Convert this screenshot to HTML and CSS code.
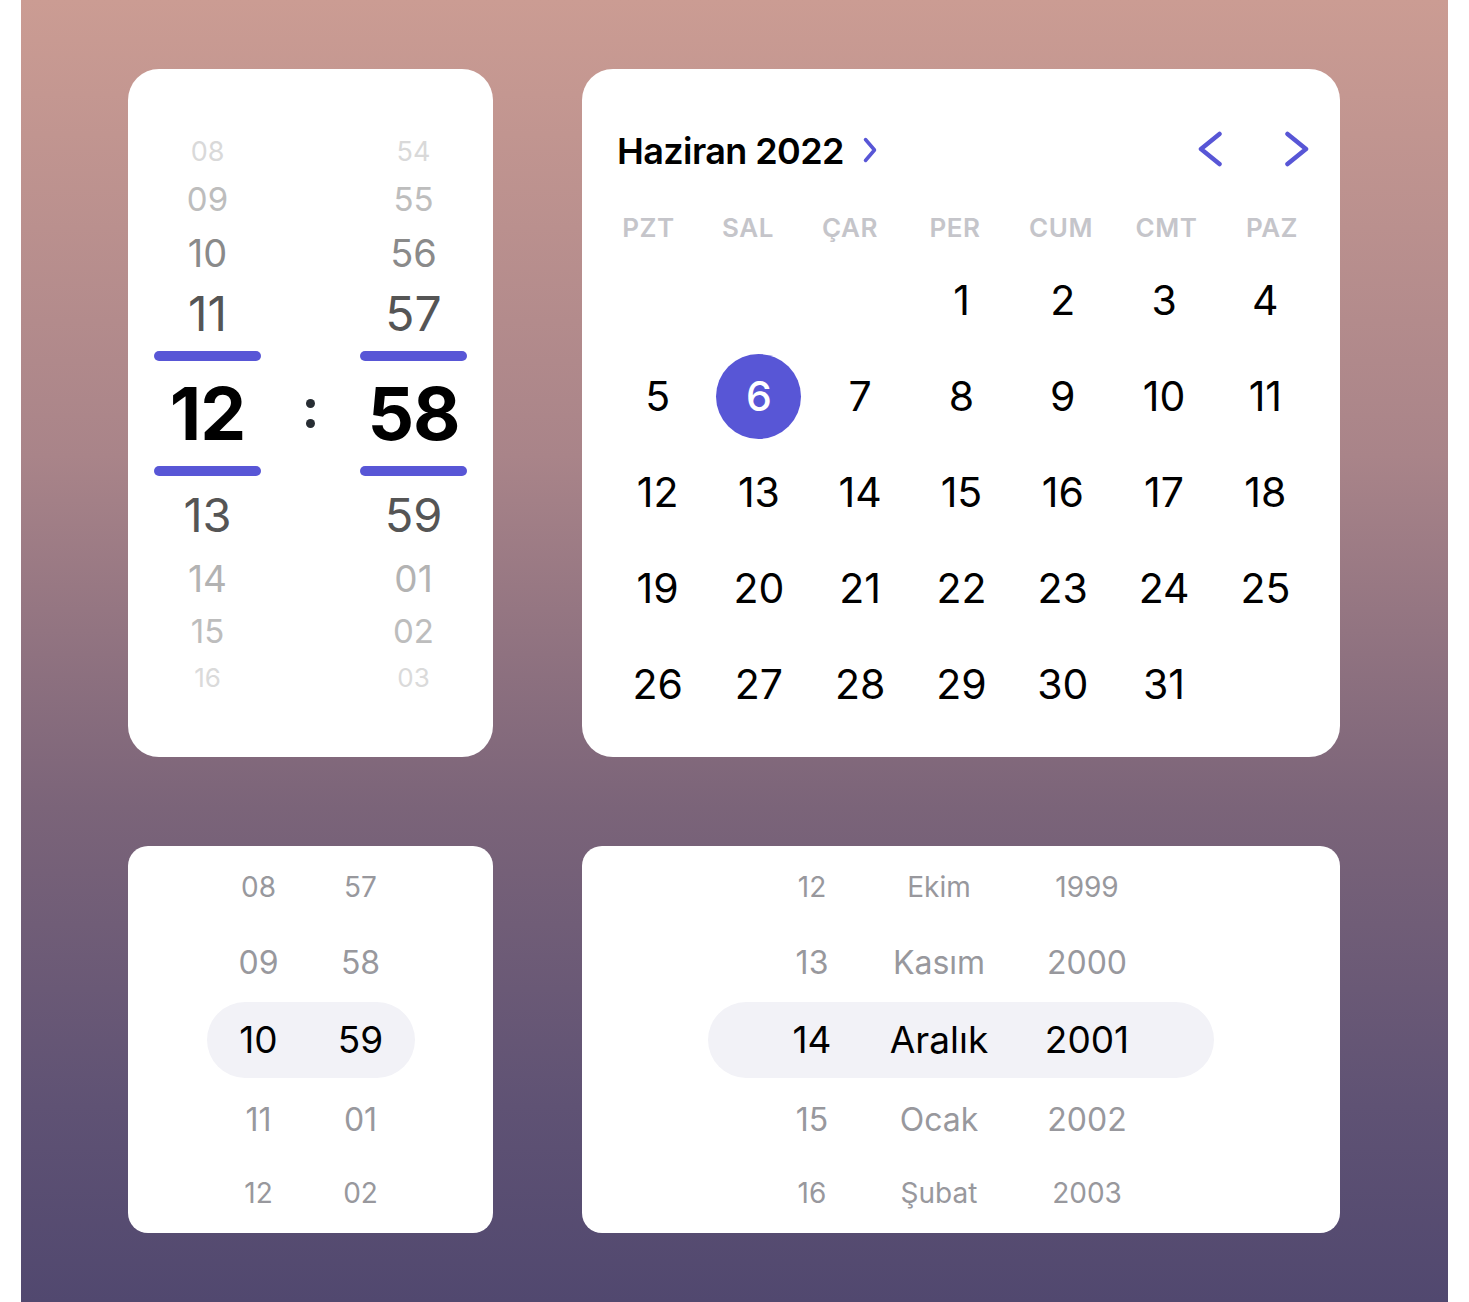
FILE: index.html
```html
<!DOCTYPE html>
<html lang="tr">
<head>
    <meta charset="UTF-8">
    <meta name="viewport" content="width=device-width, initial-scale=1.0">
    <title>Tarih ve Saat Seçiciler</title>
    <link rel="stylesheet" href="styles.css">
</head>
<body>
    <div class="stage">
        <div class="board">

            <!-- Big time wheel -->
            <div class="card wheel">
                <div class="wheel-col">
                    <span class="w r1">08</span>
                    <span class="w r2">09</span>
                    <span class="w r3">10</span>
                    <span class="w r4">11</span>
                    <span class="bar bar-top"></span>
                    <span class="w sel">12</span>
                    <span class="bar"></span>
                    <span class="w r5">13</span>
                    <span class="w r6">14</span>
                    <span class="w r7">15</span>
                    <span class="w r8">16</span>
                </div>
                <div class="colon"><i></i><i></i></div>
                <div class="wheel-col">
                    <span class="w r1">54</span>
                    <span class="w r2">55</span>
                    <span class="w r3">56</span>
                    <span class="w r4">57</span>
                    <span class="bar bar-top"></span>
                    <span class="w sel">58</span>
                    <span class="bar"></span>
                    <span class="w r5">59</span>
                    <span class="w r6">01</span>
                    <span class="w r7">02</span>
                    <span class="w r8">03</span>
                </div>
            </div>

            <!-- Calendar -->
            <div class="card calendar">
                <div class="cal-head">
                    <span class="cal-title">Haziran 2022</span>
                    <svg class="title-chev" width="14" height="26" viewBox="0 0 14 26"><path d="M2.5 2.5 L11.5 13 L2.5 23.5"/></svg>
                    <span class="spacer"></span>
                    <svg class="nav-chev" width="24" height="36" viewBox="0 0 24 36"><path d="M21.5 3 L3 18 L21.5 33"/></svg>
                    <svg class="nav-chev next" width="24" height="36" viewBox="0 0 24 36"><path d="M2.5 3 L21 18 L2.5 33"/></svg>
                </div>
                <div class="weekdays">
                    <span>PZT</span><span>SAL</span><span>ÇAR</span><span>PER</span><span>CUM</span><span>CMT</span><span>PAZ</span>
                </div>
                <div class="days" id="days"></div>
            </div>

            <!-- Small time picker -->
            <div class="card picker">
                <div class="p-row p1"><span class="c">08</span><span class="c">57</span></div>
                <div class="p-row p2"><span class="c">09</span><span class="c">58</span></div>
                <div class="p-row p-sel"><span class="c">10</span><span class="c">59</span></div>
                <div class="p-row p4"><span class="c">11</span><span class="c">01</span></div>
                <div class="p-row p5"><span class="c">12</span><span class="c">02</span></div>
            </div>

            <!-- Date picker -->
            <div class="card picker date">
                <div class="p-row p1"><span class="d">12</span><span class="m">Ekim</span><span class="y">1999</span></div>
                <div class="p-row p2"><span class="d">13</span><span class="m">Kasım</span><span class="y">2000</span></div>
                <div class="p-row p-sel"><span class="d">14</span><span class="m">Aralık</span><span class="y">2001</span></div>
                <div class="p-row p4"><span class="d">15</span><span class="m">Ocak</span><span class="y">2002</span></div>
                <div class="p-row p5"><span class="d">16</span><span class="m">Şubat</span><span class="y">2003</span></div>
            </div>

        </div>
    </div>

    <script>
        // fill the month grid: 3 blank cells, then 1..31, day 6 is selected
        const days = document.getElementById('days');
        const offset = 3;
        const selected = 6;
        for (let i = 0; i < offset; i++) {
            days.appendChild(document.createElement('span'));
        }
        for (let d = 1; d <= 31; d++) {
            const cell = document.createElement('span');
            cell.textContent = d;
            if (d === selected) cell.className = 'today';
            days.appendChild(cell);
        }
    </script>
</body>
</html>
```

FILE: styles.css
```css
body {
    margin: 0;
    background-color: #ffffff;
    font-family: Inter, "Noto Sans", Arial, sans-serif;
}
.stage {
    margin: 0 21px;
    height: 1302px;
    box-sizing: border-box;
    padding: 69px 0 0 107px;
    background: linear-gradient(180deg, #cb9c93 0%, #a98489 35%, #7b6479 62%, #5f5274 85%, #51486f 100%);
}
.board {
    display: grid;
    grid-template-columns: 365px 758px;
    grid-template-rows: 688px 387px;
    gap: 89px;
}
.card {
    background-color: #ffffff;
    border-radius: 31px;
    box-sizing: border-box;
}

/* big wheel */
.wheel {
    display: flex;
    padding: 0 26px;
}
.wheel-col {
    width: 107px;
    display: flex;
    flex-direction: column;
    align-items: center;
    padding-top: 63px;
}
.w {
    display: block;
    width: 100%;
    text-align: center;
}
.r1 { height: 40px; line-height: 40px; font-size: 27px; color: #d9d9d9; }
.r2 { height: 54px; line-height: 54px; font-size: 33px; color: #bdbdbd; }
.r3 { height: 54px; line-height: 54px; font-size: 38px; color: #8a8a8a; }
.r4 { height: 68px; line-height: 68px; font-size: 48px; color: #555555; }
.sel {
    height: 105px;
    line-height: 105px;
    font-size: 73px;
    font-weight: 700;
    color: #000000;
    letter-spacing: -1px;
}
.r5 { height: 78px; line-height: 78px; font-size: 47px; color: #555555; }
.r6 { height: 49px; line-height: 49px; font-size: 37px; color: #b3b3b3; }
.r7 { height: 56px; line-height: 56px; font-size: 33px; color: #bdbdbd; }
.r8 { height: 37px; line-height: 37px; font-size: 26px; color: #dadada; }
.bar {
    display: block;
    width: 107px;
    height: 10px;
    border-radius: 5px;
    background-color: #5856d6;
}
.bar-top {
    margin-top: 3px;
}
.colon {
    width: 100px;
    display: flex;
    flex-direction: column;
    align-items: center;
    gap: 11px;
    padding-top: 330px;
}
.colon i {
    width: 9px;
    height: 9px;
    border-radius: 50%;
    background-color: #272d33;
}

/* calendar */
.calendar {
    padding-top: 52px;
}
.cal-head {
    display: flex;
    align-items: center;
    height: 60px;
    padding: 0 31px 0 35px;
}
.cal-title {
    font-size: 36px;
    font-weight: 600;
    color: #000000;
    line-height: 60px;
    letter-spacing: -0.6px;
}
.cal-head svg path {
    fill: none;
    stroke: #5856d6;
    stroke-linecap: round;
    stroke-linejoin: round;
}
.title-chev {
    margin-left: 19px;
    margin-top: -2px;
}
.title-chev path {
    stroke-width: 3.5;
}
.nav-chev {
    margin-top: -4px;
}
.nav-chev path {
    stroke-width: 4.5;
}
.nav-chev.next {
    margin-left: 63px;
}
.spacer {
    flex: 1;
}
.weekdays {
    display: grid;
    grid-template-columns: 99px 100px 104px 106px 106px 105px 106px;
    height: 40px;
    margin-top: 27px;
    padding-left: 17px;
}
.weekdays span {
    text-align: center;
    line-height: 40px;
    font-size: 26px;
    font-weight: 600;
    color: #c5c5ca;
    letter-spacing: 0.5px;
}
.days {
    display: grid;
    grid-template-columns: repeat(7, 1fr);
    grid-auto-rows: 96px;
    margin-top: 4px;
    padding: 0 24px 0 25px;
}
.days span {
    display: flex;
    align-items: center;
    justify-content: center;
    font-size: 41px;
    color: #000000;
}
.days .today {
    width: 85px;
    height: 85px;
    margin: auto;
    border-radius: 50%;
    background-color: #5856d6;
    color: #ffffff;
    font-weight: 500;
}

/* small pickers */
.picker {
    border-radius: 20px;
}
.p-row {
    display: flex;
    width: 208px;
    margin: 0 auto;
    padding-left: 1px;
    box-sizing: border-box;
    color: #98989d;
}
.p-row span {
    text-align: center;
}
.c {
    width: 102px;
}
.p1 { height: 82px; line-height: 82px; font-size: 28px; }
.p2 { height: 69px; line-height: 69px; font-size: 32px; }
.p-sel {
    height: 76px;
    line-height: 76px;
    margin-top: 5px;
    font-size: 37px;
    color: #000000;
    background-color: #f2f2f7;
    border-radius: 38px;
}
.p4 { height: 84px; line-height: 84px; font-size: 32px; }
.p5 { height: 62px; line-height: 62px; font-size: 28px; }

.date .p-row {
    width: 506px;
    padding-left: 44px;
}
.date .d { width: 120px; }
.date .m { width: 134px; }
.date .y { width: 162px; }
```
